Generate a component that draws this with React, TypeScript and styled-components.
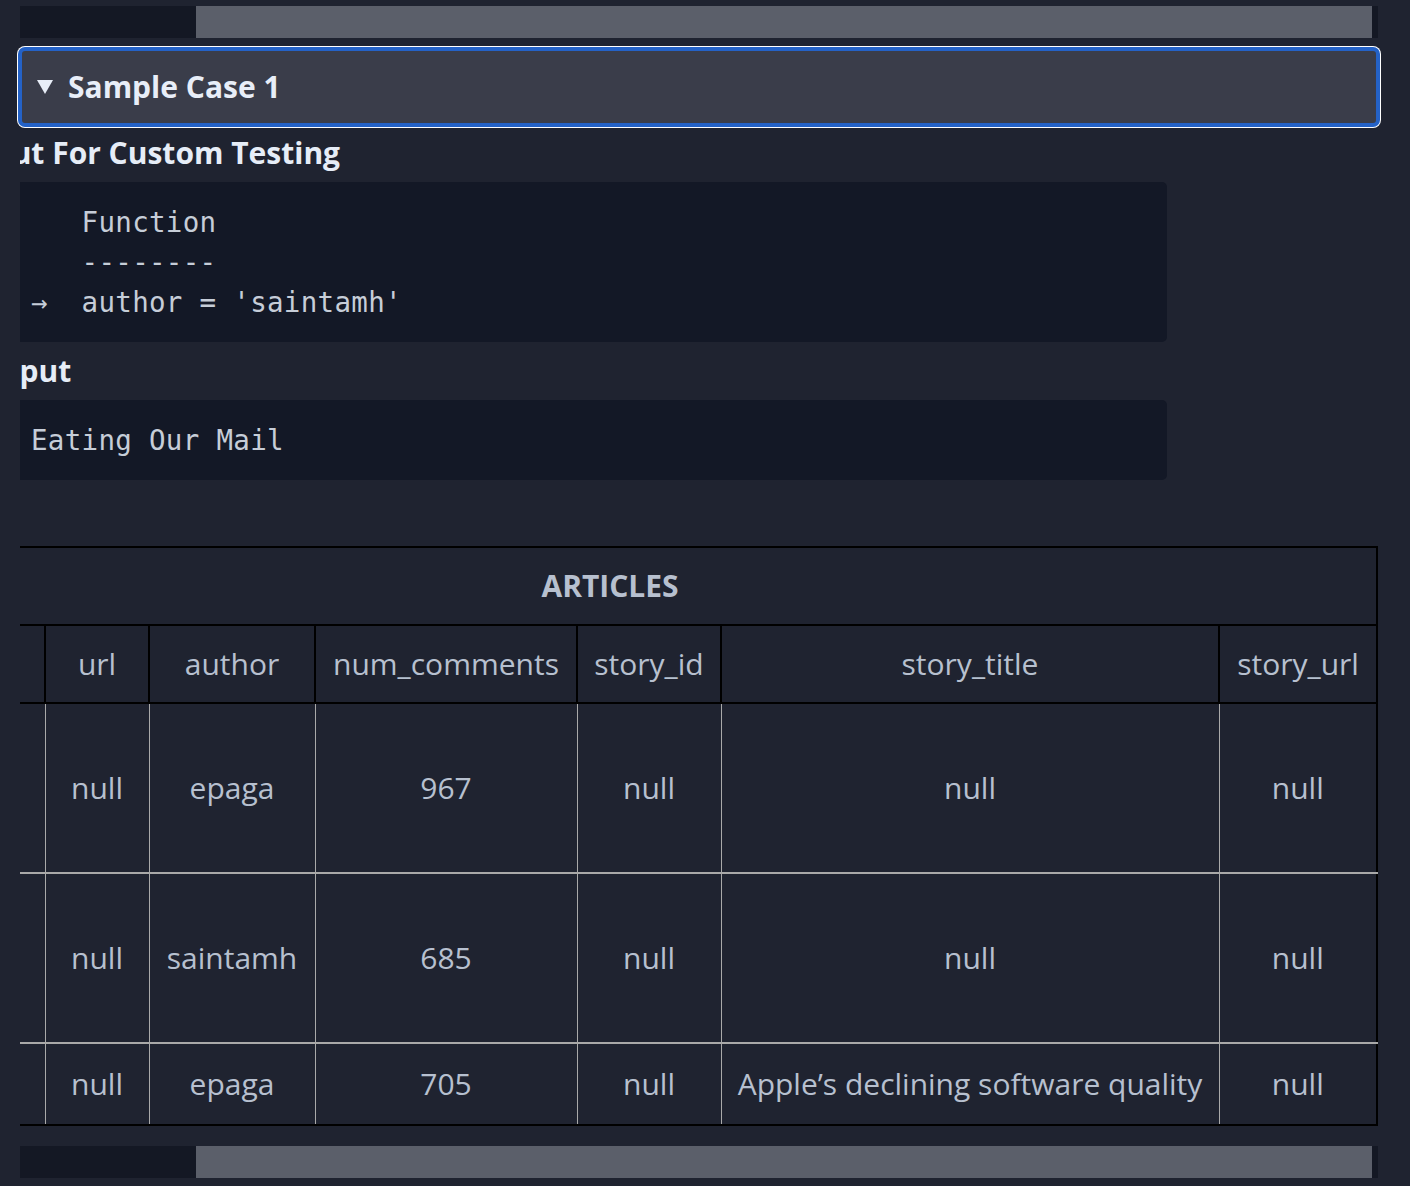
import styled, { createGlobalStyle } from "styled-components";

const GlobalStyle = createGlobalStyle`
  body {
    margin: 0;
    background: #1f2330;
    font-family: "Open Sans", "Noto Sans", sans-serif;
  }
`;

const Page = styled.div`
  padding: 6px 32px 8px 20px;
`;

const ScrollTrack = styled.div`
  height: 32px;
  background: #141824;
  display: flex;
`;

const ScrollThumb = styled.div`
  margin-left: 176px;
  width: 1176px;
  background: #5b5f6a;
`;

const CaseSummary = styled.div`
  margin-top: 11px;
  height: 76px;
  box-sizing: border-box;
  border: 2px solid #2462c7;
  border-radius: 5px;
  box-shadow: 0 0 0 2px #2462c7, 0 0 0 3px #ffffff;
  background: #3a3d4a;
  display: flex;
  align-items: center;
  gap: 15px;
  padding: 0 0 2px 15px;
  color: #e8eef8;
  font-weight: 700;
  font-size: 30px;
`;

const Viewport = styled.div`
  overflow: hidden;
`;

const Shifted = styled.div<{ $shift: number }>`
  margin-left: ${(p) => -p.$shift}px;
`;

const SectionTitle = styled.h3<{ $top?: number }>`
  margin: ${(p) => p.$top ?? 10}px 0 11px;
  font-weight: 700;
  font-size: 30px;
  line-height: 36px;
  color: #e6edf7;
  white-space: nowrap;
`;

const CodeBlock = styled.pre`
  margin: 0;
  width: 1204px;
  box-sizing: border-box;
  padding: 20px 20px 20px 68px;
  background: #131826;
  border-radius: 5px;
  font-family: "DejaVu Sans Mono", "Liberation Mono", monospace;
  font-size: 27.5px;
  letter-spacing: 0.3px;
  line-height: 40px;
  color: #c6cdd8;
`;

const TableWrap = styled(Viewport)`
  margin-top: 66px;
`;

const Table = styled.table`
  width: 1534px;
  table-layout: fixed;
  border-collapse: collapse;
  border: 2px solid #000;
  color: #b7c0cf;
  font-size: 30px;
  line-height: 40px;
`;

const Col = styled.col<{ $w: number }>`
  width: ${(p) => p.$w}px;
`;

const TitleCell = styled.th`
  height: 76px;
  padding: 0;
  border: 2px solid #000;
  font-weight: 700;
  text-align: center;
`;

const HeadCell = styled.th`
  height: 76px;
  padding: 0 16px;
  border: 2px solid #000;
  font-weight: 400;
  text-align: center;
  white-space: nowrap;
`;

const Row = styled.tr<{ $h: number }>`
  height: ${(p) => p.$h}px;
`;

const Cell = styled.td`
  padding: 0 16px;
  border-left: 1px solid #a9a9a9;
  border-right: 1px solid #a9a9a9;
  border-top: 2px solid #a9a9a9;
  text-align: center;
  vertical-align: middle;
  white-space: nowrap;
`;

const Clipped = styled.span`
  display: block;
  margin-right: 44px;
  overflow: hidden;
  text-overflow: ellipsis;
`;

const BottomScroll = styled(ScrollTrack)`
  margin-top: 20px;
`;

function Caret() {
  return (
    <svg width="16" height="15" viewBox="0 0 16 15">
      <polygon points="0,1 16,1 8,15" fill="#e8eef8" />
    </svg>
  );
}

interface Article {
  title: string;
  url: string;
  author: string;
  num_comments: number;
  story_id: string;
  story_title: string;
  story_url: string;
  h: number;
}

const columns = ["title", "url", "author", "num_comments", "story_id", "story_title", "story_url"];
const widths = [202, 104, 166, 262, 144, 498, 158];

const articles: Article[] = [
  { title: "A Message to Our Customers", url: "null", author: "epaga", num_comments: 967, story_id: "null", story_title: "null", story_url: "null", h: 170 },
  { title: "Was isolated from 1999 to 2006 with a 486", url: "null", author: "saintamh", num_comments: 685, story_id: "null", story_title: "null", story_url: "null", h: 170 },
  { title: "null", url: "null", author: "epaga", num_comments: 705, story_id: "null", story_title: "Apple’s declining software quality", story_url: "null", h: 82 },
];

export default function App() {
  return (
    <>
      <GlobalStyle />
      <Page>
        <ScrollTrack><ScrollThumb /></ScrollTrack>
        <CaseSummary>
          <Caret />
          <span>Sample Case 1</span>
        </CaseSummary>

        <Viewport>
          <Shifted $shift={57}>
            <SectionTitle>Input For Custom Testing</SectionTitle>
            <CodeBlock>{"   Function\n   --------\n→  author = 'saintamh'"}</CodeBlock>
            <SectionTitle $top={11}>Output</SectionTitle>
            <CodeBlock>{"Eating Our Mail"}</CodeBlock>
          </Shifted>
        </Viewport>

        <TableWrap>
          <Shifted $shift={178}>
            <Table>
              <colgroup>
                {widths.map((w, i) => <Col key={i} $w={w} />)}
              </colgroup>
              <thead>
                <tr><TitleCell colSpan={columns.length}>ARTICLES</TitleCell></tr>
                <tr>{columns.map((c) => <HeadCell key={c}>{c}</HeadCell>)}</tr>
              </thead>
              <tbody>
                {articles.map((a, i) => (
                  <Row key={i} $h={a.h}>
                    <Cell><Clipped>{a.title}</Clipped></Cell>
                    <Cell>{a.url}</Cell>
                    <Cell>{a.author}</Cell>
                    <Cell>{a.num_comments}</Cell>
                    <Cell>{a.story_id}</Cell>
                    <Cell>{a.story_title}</Cell>
                    <Cell>{a.story_url}</Cell>
                  </Row>
                ))}
              </tbody>
            </Table>
          </Shifted>
        </TableWrap>

        <BottomScroll><ScrollThumb /></BottomScroll>
      </Page>
    </>
  );
}
